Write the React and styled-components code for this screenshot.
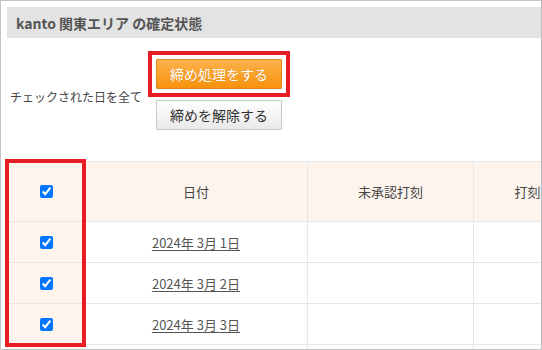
import React from 'react'
import styled, { createGlobalStyle } from 'styled-components'

const Global = createGlobalStyle`
  html, body { margin: 0; padding: 0; background: #fff; }
  body { font-family: "Noto Sans CJK JP", "Noto Sans", sans-serif; }
`

const Frame = styled.div`
  width: 542px;
  height: 350px;
  box-sizing: border-box;
  border: 1px solid #c4c4c4;
  border-right-color: #bcbcbc;
  padding: 6px 0 0 6px;
  overflow: hidden;
`

const TitleBar = styled.div`
  height: 31px;
  background: #e3e3e3;
  display: flex;
  align-items: center;
  padding-left: 9px;
  font-size: 14px;
  font-weight: 700;
  color: #555;
`

const Actions = styled.div`
  display: flex;
  align-items: center;
  gap: 14px;
  padding: 21px 0 31px 3px;
`

const Note = styled.span`
  font-size: 12px;
  color: #444;
  padding-top: 3px;
  white-space: nowrap;
`

const ButtonStack = styled.div`
  display: flex;
  flex-direction: column;
  gap: 11px;
`

const Marked = styled.div`
  position: relative;
  &::after {
    content: '';
    position: absolute;
    left: -8px;
    top: -8px;
    right: -8px;
    bottom: -8px;
    border: 4px solid #e81c24;
    pointer-events: none;
  }
`

const Button = styled.button`
  display: block;
  width: 126px;
  height: 30px;
  box-sizing: border-box;
  font-family: inherit;
  font-size: 14px;
  padding: 0;
  cursor: pointer;
  border-radius: 1px;
  border: 1px solid ${p => (p.$primary ? '#dc8a22' : '#c8c8c8')};
  color: ${p => (p.$primary ? '#fff' : '#333')};
  background: ${p =>
    p.$primary
      ? 'linear-gradient(#fcb24c, #f7920c)'
      : 'linear-gradient(#ffffff, #e9e9e9)'};
  text-shadow: ${p => (p.$primary ? '0 0 1px rgba(160, 80, 0, 0.4)' : 'none')};
`

const TableWrap = styled.div`
  position: relative;
  width: 574px;
`

const Highlight = styled.div`
  position: absolute;
  left: -2px;
  top: -2px;
  width: 81px;
  height: 188px;
  box-sizing: border-box;
  border: 4px solid #e81c24;
  pointer-events: none;
`

const Table = styled.table`
  width: 574px;
  table-layout: fixed;
  border-collapse: collapse;
  font-size: 13px;
`

const Th = styled.th`
  height: 59px;
  padding: 0;
  font-weight: 400;
  color: #444;
  background: #fdf4ee;
  border: 1px solid #e6e6e6;
  text-align: center;
  white-space: nowrap;
`

const Td = styled.td`
  height: 40px;
  padding: 0;
  text-align: center;
  border: 1px solid #e6e6e6;
  background: ${p => (p.$check ? '#fdf4ee' : '#fff')};
`

const Check = styled.input`
  display: block;
  width: 13px;
  height: 13px;
  margin: 0 auto;
  accent-color: #0075ff;
`

const DateLink = styled.a`
  color: #555;
  text-decoration: underline;
  text-underline-offset: 2px;
`

const days = [1, 2, 3]

export default function App() {
  return (
    <Frame>
      <Global />
      <TitleBar>kanto 関東エリア の確定状態</TitleBar>
      <Actions>
        <Note>チェックされた日を全て</Note>
        <ButtonStack>
          <Marked>
            <Button $primary>締め処理をする</Button>
          </Marked>
          <Button>締めを解除する</Button>
        </ButtonStack>
      </Actions>
      <TableWrap>
        <Table>
          <colgroup>
            <col style={{ width: 77 }} />
            <col style={{ width: 223 }} />
            <col style={{ width: 166 }} />
            <col style={{ width: 108 }} />
          </colgroup>
          <thead>
            <tr>
              <Th>
                <Check type="checkbox" defaultChecked />
              </Th>
              <Th>日付</Th>
              <Th>未承認打刻</Th>
              <Th>打刻</Th>
            </tr>
          </thead>
          <tbody>
            {days.map(d => (
              <tr key={d}>
                <Td $check>
                  <Check type="checkbox" defaultChecked />
                </Td>
                <Td>
                  <DateLink href="#">2024年 3月 {d}日</DateLink>
                </Td>
                <Td />
                <Td />
              </tr>
            ))}
            <tr>
              <Td $check />
              <Td />
              <Td />
              <Td />
            </tr>
          </tbody>
        </Table>
        <Highlight />
      </TableWrap>
    </Frame>
  )
}
